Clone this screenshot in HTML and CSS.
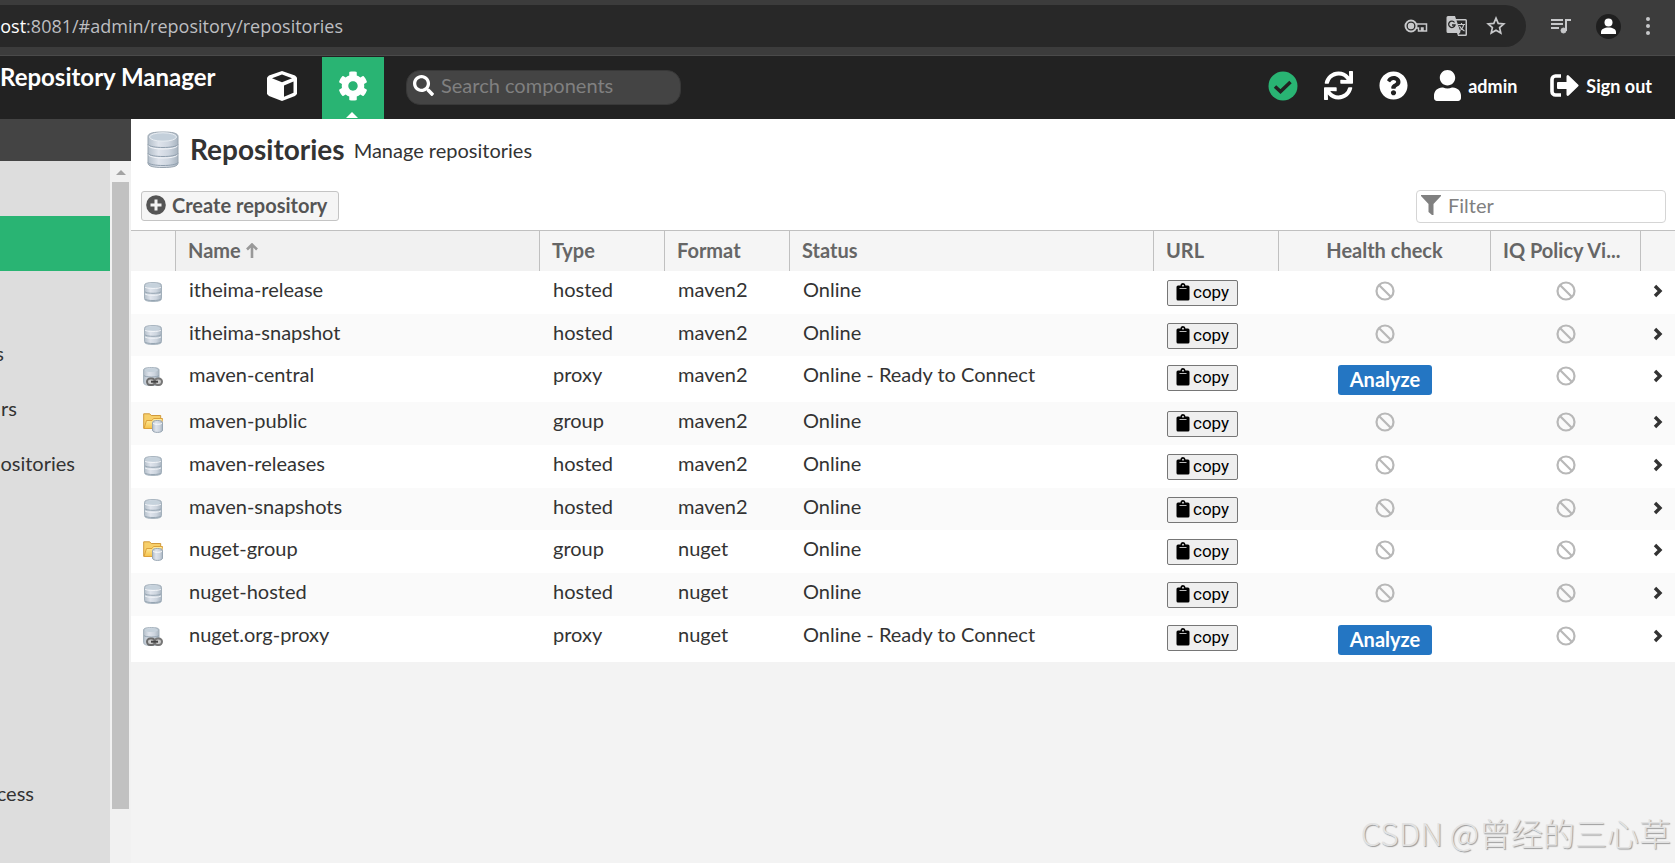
FILE: index.html
```html
<!DOCTYPE html>
<html lang="en">
<head>
<meta charset="utf-8">
<title>Repositories - Repository Manager</title>
<link rel="stylesheet" href="styles.css">
</head>
<body>
<svg class="sprite" aria-hidden="true">
  <defs>
    <linearGradient id="metal" x1="0" x2="1" y1="0" y2="0">
      <stop offset="0" stop-color="#b4bfca"/><stop offset=".35" stop-color="#dfe4ec"/><stop offset=".7" stop-color="#cdd5df"/><stop offset="1" stop-color="#a9b5c1"/>
    </linearGradient>
    <linearGradient id="folder" x1="0" x2="0" y1="0" y2="1">
      <stop offset="0" stop-color="#fff0a8"/><stop offset="1" stop-color="#f5c24a"/>
    </linearGradient>
  </defs>
  <symbol id="db" viewBox="0 0 20 20">
    <path d="M1.5 3.500C1.500 1.500 4 .6 10 .6s8.500 .9 8.500 2.900v13c0 2-2.500 2.900-8.500 2.900s-8.500-.9-8.500-2.900z" fill="url(#metal)" stroke="#a3b0bb"/>
    <ellipse cx="10" cy="3.500" rx="7.500" ry="2.200" fill="#c6d2dc"/>
    <path d="M2 5c1 2 15 2 16 0M2 11.800c1 2 15 2 16 0" fill="none" stroke="#f1f4f8"/>
    <path d="M2 9.800c1 2 15 2 16 0M2 17c1 2 15 2 16 0" fill="none" stroke="#96a5b2"/>
  </symbol>
  <symbol id="db-big" viewBox="0 0 34 38">
    <path d="M2 5.500C2 2 8 1 17 1s15 1 15 4.500V32c0 3.500-6 4.500-15 4.500S2 35.500 2 32z" fill="url(#metal)" stroke="#98a4af"/>
    <ellipse cx="17" cy="6" rx="13.500" ry="4.200" fill="#c3cfda" stroke="#e8edf2"/>
    <path d="M2 13.500c2 4 28 4 30 0M2 22.500c2 4 28 4 30 0M2 31.500c2 4 28 4 30 0" fill="none" stroke="#8f9ead"/>
    <path d="M2.500 15c2 4 27 4 29 0M2.500 24c2 4 27 4 29 0" fill="none" stroke="#f3f5f9"/>
  </symbol>
  <symbol id="db-link" viewBox="0 0 20 20">
    <path d="M.6 3C.6 1.300 3 .6 8.300 .6S16 1.300 16 3v12.500c0 2-2.500 3-7.700 3S.6 17.500 .6 15.500z" fill="url(#metal)" stroke="#a3b0bb"/>
    <ellipse cx="8.300" cy="3.200" rx="6.500" ry="1.900" fill="#c6d2dc"/>
    <path d="M1 8.500c1 2 14 2 15 0" fill="none" stroke="#96a5b2"/>
    <rect x="4" y="11.500" width="8" height="6.500" rx="3.200" fill="#ccc" stroke="#6a6a6a" stroke-width="2"/>
    <rect x="11.500" y="11.500" width="7.500" height="6.500" rx="3.200" fill="#ccc" stroke="#777" stroke-width="2"/>
    <path d="M8 14.700h7" stroke="#444" stroke-width="2"/>
  </symbol>
  <symbol id="folder-db" viewBox="0 0 20 20">
    <path d="M.7 15.300V.8h6l1.500 1.700h9.500v12.800z" fill="#f7cf6a" stroke="#d19a3c"/>
    <path d="M1 15.500l2.500-8H9l1.500-2h9l-1.500 10z" fill="url(#folder)" stroke="#dca13c"/>
    <path d="M9.500 9.500c0-1.300 2-2 5-2s5 .7 5 2v7.500c0 1.600-2 2.400-5 2.400s-5-.8-5-2.400z" fill="url(#metal)" stroke="#98a6b3"/>
    <path d="M10 10.200c1 1.400 8 1.400 9 0" fill="none" stroke="#fff"/>
  </symbol>
  <symbol id="ban" viewBox="0 0 20 20"><circle cx="10" cy="10" r="8.500" fill="none" stroke="currentColor" stroke-width="2.200"/><path d="M4 4l12 12" stroke="currentColor" stroke-width="2.200"/></symbol>
  <symbol id="chev" viewBox="0 0 10 14"><path d="M2 2l5 5-5 5" fill="none" stroke="currentColor" stroke-width="3.400"/></symbol>
  <symbol id="clip" viewBox="0 0 14 18"><path d="M2 2.500h2.500a2.500 2.500 0 0 1 5 0H12a1.500 1.500 0 0 1 1.500 1.500v12a1.500 1.500 0 0 1-1.500 1.500H2A1.500 1.500 0 0 1 .5 16V4A1.500 1.500 0 0 1 2 2.500z"/><circle cx="7" cy="2.700" r=".9" fill="#efefef"/><path d="M3.500 5.500h7" stroke="#bbb"/></symbol>
  <symbol id="cog" viewBox="0 0 512 512"><path d="M487.4 315.7l-42.6-24.600c4.300-23.200 4.300-47 0-70.200l42.600-24.600c4.900-2.800 7.100-8.600 5.500-14-11.100-35.600-30-67.800-54.700-94.600-3.800-4.100-10-5.100-14.800-2.300L380.800 110c-17.900-15.400-38.500-27.300-60.800-35.100V25.800c0-5.600-3.900-10.500-9.400-11.700-36.700-8.200-74.300-7.800-109.200 0-5.500 1.200-9.400 6.100-9.400 11.700V75c-22.200 7.900-42.800 19.800-60.800 35.100L88.700 85.500c-4.900-2.800-11-1.900-14.800 2.300-24.700 26.700-43.600 58.900-54.700 94.600-1.700 5.400.6 11.200 5.500 14L67.300 221c-4.300 23.200-4.300 47 0 70.200l-42.600 24.600c-4.900 2.800-7.100 8.600-5.500 14 11.100 35.600 30 67.800 54.700 94.600 3.800 4.100 10 5.100 14.800 2.300l42.600-24.600c17.900 15.400 38.500 27.300 60.800 35.100v49.200c0 5.600 3.900 10.500 9.400 11.700 36.700 8.200 74.300 7.800 109.200 0 5.500-1.200 9.400-6.100 9.400-11.700v-49.200c22.200-7.900 42.800-19.800 60.800-35.100l42.600 24.600c4.900 2.800 11 1.900 14.800-2.300 24.700-26.700 43.600-58.900 54.700-94.600 1.500-5.500-.7-11.300-5.600-14.100zM256 336c-44.100 0-80-35.900-80-80s35.900-80 80-80 80 35.900 80 80-35.900 80-80 80z"/></symbol>
</svg>

<div class="browser">
  <div class="address">
    <div class="url"><span class="url-host">host</span>:8081/#admin/repository/repositories</div>
    <div class="address-icons">
      <svg width="24" height="16" viewBox="0 0 24 16" fill="none" stroke="#c7c8ca" stroke-width="2"><circle cx="7" cy="8" r="5.500"/><circle cx="7" cy="8" r="2.200" fill="#c7c8ca"/><path d="M12 6h10.500v7H19v-3h-1.500v3h-3v-3H12" stroke-width="1.500"/></svg>
      <svg width="22" height="22" viewBox="0 0 22 22"><path d="M2 1h7l1 3h9.500A1.500 1.500 0 0 1 21 5.500v14a1.500 1.500 0 0 1-1.500 1.500H12l-1-3H2a1.500 1.500 0 0 1-1.500-1.500v-14A1.500 1.500 0 0 1 2 1z" fill="#c7c8ca"/><path d="M10.500 5.500h9v14h-7l2-2.500z" fill="#292929"/><path d="M8.500 7.500A3.200 3.200 0 1 0 9 10H6" fill="none" stroke="#292929" stroke-width="1.300"/><path d="M12 9.500h7M15.500 8v1.500M17.500 10c-.5 3-2.500 5-4.500 6M13.500 11c1 2.500 3 4 5 5" fill="none" stroke="#c7c8ca" stroke-width="1.200"/></svg>
      <svg width="20" height="20" viewBox="0 0 20 20"><path d="M10 2.200l2.200 5.200 5.600.5-4.200 3.700 1.200 5.500-4.800-2.900-4.800 2.900 1.200-5.500L2.200 7.900l5.600-.5z" fill="none" stroke="#c7c8ca" stroke-width="1.700"/></svg>
    </div>
  </div>
  <div class="browser-icons">
    <svg width="20" height="16" viewBox="0 0 20 16" fill="none" stroke="#c7c8ca" stroke-width="2"><path d="M0 2h12M0 6h12M0 10h8M15 13V2h5"/><circle cx="12.500" cy="12.500" r="2.500" fill="#c7c8ca" stroke-width="1"/></svg>
    <span class="avatar"><svg width="17" height="17" viewBox="0 0 17 17" fill="#fff"><circle cx="8.500" cy="4.500" r="4"/><path d="M1 16v-2c0-3 3.500-4.500 7.500-4.500S16 11 16 14v2z"/></svg></span>
    <svg width="4" height="18" viewBox="0 0 4 18" fill="#c7c8ca"><circle cx="2" cy="2" r="2"/><circle cx="2" cy="9" r="2"/><circle cx="2" cy="16" r="2"/></svg>
  </div>
</div>

<header class="topbar">
  <div class="brand">Repository Manager</div>
  <button class="mode" aria-label="Browse"><svg width="32" height="32" viewBox="0 0 32 32"><path d="M16 1l13 4.500 2 2V24l-2 2-13 5-13-5-2-2V7.500l2-2z" fill="#fff"/><path d="M16 4.500l10 3.700-10 4-10-4zM18 15.500l9.500-4v11.300L18 26.700z" fill="#222"/></svg></button>
  <button class="mode active" aria-label="Administration"><svg width="30" height="30" fill="#fff"><use href="#cog"/></svg><span class="caret"></span></button>
  <label class="search">
    <svg width="21" height="21" viewBox="0 0 512 512" fill="#fff"><path d="M505 442.700L405.300 343c-4.500-4.500-10.600-7-17-7H372c27.600-35.300 44-79.700 44-128C416 93.100 322.900 0 208 0S0 93.100 0 208s93.100 208 208 208c48.300 0 92.700-16.400 128-44v16.300c0 6.400 2.500 12.500 7 17l99.700 99.700c9.400 9.400 24.600 9.400 33.900 0l28.300-28.300c9.400-9.400 9.400-24.600.1-34zM208 336c-70.700 0-128-57.200-128-128 0-70.700 57.200-128 128-128 70.700 0 128 57.200 128 128 0 70.700-57.200 128-128 128z"/></svg>
    <input type="text" placeholder="Search components" aria-label="Search components">
  </label>
  <div class="tools">
    <button class="tool" aria-label="Status"><svg width="30" height="30" viewBox="0 0 30 30"><circle cx="15" cy="15" r="14.500" fill="#29b473"/><path d="M7 15.500l5.500 5L22.500 11" fill="none" stroke="#222" stroke-width="3.500"/></svg></button>
    <button class="tool" aria-label="Refresh"><svg width="29" height="29" viewBox="0 0 512 512" fill="#fff"><path d="M440.650 12.570l4 82.770A247.160 247.160 0 0 0 255.830 8C134.730 8 33.910 94.920 12.290 209.820A12 12 0 0 0 24.090 224h49.050a12 12 0 0 0 11.670-9.260 175.910 175.910 0 0 1 317-56.940l-101.460-4.860a12 12 0 0 0-12.570 12v47.410a12 12 0 0 0 12 12H500a12 12 0 0 0 12-12V12a12 12 0 0 0-12-12h-47.370a12 12 0 0 0-11.980 12.570zM255.830 432a175.610 175.610 0 0 1-146-77.800l101.800 4.870a12 12 0 0 0 12.570-12v-47.400a12 12 0 0 0-12-12H12a12 12 0 0 0-12 12V500a12 12 0 0 0 12 12h47.350a12 12 0 0 0 12-12.600l-4.150-82.570A247.170 247.170 0 0 0 255.830 504c121.110 0 221.930-86.920 243.550-201.820a12 12 0 0 0-11.800-14.180h-49.050a12 12 0 0 0-11.670 9.260A175.860 175.860 0 0 1 255.830 432z"/></svg></button>
    <button class="tool" aria-label="Help"><svg width="29" height="29" viewBox="0 0 512 512" fill="#fff"><path d="M504 256c0 136.997-111.043 248-248 248S8 392.997 8 256C8 119.083 119.043 8 256 8s248 111.083 248 248zM262.655 90c-54.497 0-89.255 22.957-116.549 63.758-3.536 5.286-2.353 12.415 2.715 16.258l34.699 26.310c5.205 3.947 12.621 3.008 16.665-2.122 17.864-22.658 30.113-35.797 57.303-35.797 20.429 0 45.698 13.148 45.698 32.958 0 14.976-12.363 22.667-32.534 33.976C247.128 238.528 216 254.941 216 296v4c0 6.627 5.373 12 12 12h56c6.627 0 12-5.373 12-12v-1.333c0-28.462 83.186-29.647 83.186-106.667 0-58.002-60.165-102-116.531-102zM256 338c-25.365 0-46 20.635-46 46 0 25.364 20.635 46 46 46s46-20.636 46-46c0-25.365-20.635-46-46-46z"/></svg></button>
    <button class="tool tool-user"><svg width="27" height="31" viewBox="0 0 448 512" fill="#fff"><path d="M224 256c70.700 0 128-57.300 128-128S294.700 0 224 0 96 57.300 96 128s57.300 128 128 128zm89.600 32h-16.700c-22.200 10.200-46.900 16-72.900 16s-50.600-5.800-72.900-16h-16.700C60.200 288 0 348.200 0 422.400V464c0 26.500 21.500 48 48 48h352c26.500 0 48-21.500 48-48v-41.600c0-74.200-60.200-134.400-134.400-134.400z"/></svg>admin</button>
    <button class="tool tool-out"><svg width="29" height="23" viewBox="0 0 29 23"><path d="M11 2H5.500A3.500 3.500 0 0 0 2 5.500v12A3.500 3.500 0 0 0 5.500 21H11" fill="none" stroke="#fff" stroke-width="3.600"/><path d="M8 8h8.500V2.500a1.300 1.300 0 0 1 2.200-1L28 10.500a1.300 1.300 0 0 1 0 2l-9.300 9a1.300 1.300 0 0 1-2.200-1V15H8a1 1 0 0 1-1-1V9a1 1 0 0 1 1-1z" fill="#fff"/></svg>Sign out</button>
  </div>
</header>

<div class="body">
  <aside class="side">
    <div class="side-head"></div>
    <div class="side-body">
      <nav class="menu">
        <div class="item"></div>
        <div class="item selected"></div>
        <div class="item"></div>
        <div class="item"><span class="cut cut-xs">s</span></div>
        <div class="item"><span class="cut cut-sm">rs</span></div>
        <div class="item"><span class="cut cut-lg">ositories</span></div>
        <div class="item"></div>
        <div class="item"></div>
        <div class="item"></div>
        <div class="item"></div>
        <div class="item"></div>
        <div class="item"><span class="cut cut-md">cess</span></div>
      </nav>
      <div class="scroll"><div class="scroll-up"></div><div class="scroll-thumb"></div></div>
    </div>
  </aside>

  <main class="main">
    <div class="head">
      <svg width="34" height="38"><use href="#db-big"/></svg>
      <h1>Repositories</h1>
      <span class="sub">Manage repositories</span>
    </div>
    <div class="bar">
      <button class="create"><svg width="20" height="20" viewBox="0 0 20 20"><circle cx="10" cy="10" r="9.800" fill="#555"/><path d="M10 4.500v11M4.500 10h11" stroke="#f5f5f5" stroke-width="3"/></svg>Create repository</button>
      <label class="filter"><svg width="20" height="20" viewBox="0 0 20 20"><path d="M0 0h20v1l-7.500 8v11h-1.500L7.500 17V9L0 1z" fill="#808080"/></svg><input type="text" placeholder="Filter" aria-label="Filter"></label>
    </div>
    <table class="grid">
      <colgroup><col class="c-icon"><col><col class="c-std"><col class="c-std"><col><col class="c-std"><col class="c-health"><col class="c-iq"><col class="c-go"></colgroup>
      <thead><tr><th></th><th class="sorted">Name <svg width="12" height="15" viewBox="0 0 12 15"><path d="M6 15V2M1 6.500L6 1.500l5 5" fill="none" stroke="#999" stroke-width="2.600"/></svg></th><th>Type</th><th>Format</th><th>Status</th><th>URL</th><th class="mid">Health check</th><th>IQ Policy Vi...</th><th></th></tr></thead>
      <tbody>
        <tr><td class="ico"><svg width="20" height="20"><use href="#db"/></svg></td><td>itheima-release</td><td>hosted</td><td>maven2</td><td>Online</td><td><button class="copy"><svg width="14" height="18"><use href="#clip"/></svg>copy</button></td><td class="na"><svg width="20" height="20"><use href="#ban"/></svg></td><td class="na"><svg width="20" height="20"><use href="#ban"/></svg></td><td class="go"><svg width="10" height="14"><use href="#chev"/></svg></td></tr>
        <tr><td class="ico"><svg width="20" height="20"><use href="#db"/></svg></td><td>itheima-snapshot</td><td>hosted</td><td>maven2</td><td>Online</td><td><button class="copy"><svg width="14" height="18"><use href="#clip"/></svg>copy</button></td><td class="na"><svg width="20" height="20"><use href="#ban"/></svg></td><td class="na"><svg width="20" height="20"><use href="#ban"/></svg></td><td class="go"><svg width="10" height="14"><use href="#chev"/></svg></td></tr>
        <tr class="tall"><td class="ico"><svg width="20" height="20"><use href="#db-link"/></svg></td><td>maven-central</td><td>proxy</td><td>maven2</td><td>Online - Ready to Connect</td><td><button class="copy"><svg width="14" height="18"><use href="#clip"/></svg>copy</button></td><td class="mid"><button class="analyze">Analyze</button></td><td class="na"><svg width="20" height="20"><use href="#ban"/></svg></td><td class="go"><svg width="10" height="14"><use href="#chev"/></svg></td></tr>
        <tr><td class="ico"><svg width="20" height="20"><use href="#folder-db"/></svg></td><td>maven-public</td><td>group</td><td>maven2</td><td>Online</td><td><button class="copy"><svg width="14" height="18"><use href="#clip"/></svg>copy</button></td><td class="na"><svg width="20" height="20"><use href="#ban"/></svg></td><td class="na"><svg width="20" height="20"><use href="#ban"/></svg></td><td class="go"><svg width="10" height="14"><use href="#chev"/></svg></td></tr>
        <tr><td class="ico"><svg width="20" height="20"><use href="#db"/></svg></td><td>maven-releases</td><td>hosted</td><td>maven2</td><td>Online</td><td><button class="copy"><svg width="14" height="18"><use href="#clip"/></svg>copy</button></td><td class="na"><svg width="20" height="20"><use href="#ban"/></svg></td><td class="na"><svg width="20" height="20"><use href="#ban"/></svg></td><td class="go"><svg width="10" height="14"><use href="#chev"/></svg></td></tr>
        <tr><td class="ico"><svg width="20" height="20"><use href="#db"/></svg></td><td>maven-snapshots</td><td>hosted</td><td>maven2</td><td>Online</td><td><button class="copy"><svg width="14" height="18"><use href="#clip"/></svg>copy</button></td><td class="na"><svg width="20" height="20"><use href="#ban"/></svg></td><td class="na"><svg width="20" height="20"><use href="#ban"/></svg></td><td class="go"><svg width="10" height="14"><use href="#chev"/></svg></td></tr>
        <tr><td class="ico"><svg width="20" height="20"><use href="#folder-db"/></svg></td><td>nuget-group</td><td>group</td><td>nuget</td><td>Online</td><td><button class="copy"><svg width="14" height="18"><use href="#clip"/></svg>copy</button></td><td class="na"><svg width="20" height="20"><use href="#ban"/></svg></td><td class="na"><svg width="20" height="20"><use href="#ban"/></svg></td><td class="go"><svg width="10" height="14"><use href="#chev"/></svg></td></tr>
        <tr><td class="ico"><svg width="20" height="20"><use href="#db"/></svg></td><td>nuget-hosted</td><td>hosted</td><td>nuget</td><td>Online</td><td><button class="copy"><svg width="14" height="18"><use href="#clip"/></svg>copy</button></td><td class="na"><svg width="20" height="20"><use href="#ban"/></svg></td><td class="na"><svg width="20" height="20"><use href="#ban"/></svg></td><td class="go"><svg width="10" height="14"><use href="#chev"/></svg></td></tr>
        <tr class="tall"><td class="ico"><svg width="20" height="20"><use href="#db-link"/></svg></td><td>nuget.org-proxy</td><td>proxy</td><td>nuget</td><td>Online - Ready to Connect</td><td><button class="copy"><svg width="14" height="18"><use href="#clip"/></svg>copy</button></td><td class="mid"><button class="analyze">Analyze</button></td><td class="na"><svg width="20" height="20"><use href="#ban"/></svg></td><td class="go"><svg width="10" height="14"><use href="#chev"/></svg></td></tr>
      </tbody>
    </table>
    <div class="watermark">CSDN @曾经的三心草</div>
  </main>
</div>
</body>
</html>
```

FILE: styles.css
```css
* { box-sizing: border-box; }

body {
  margin: 0;
  height: 100vh;
  display: flex;
  flex-direction: column;
  overflow: hidden;
  background: #f3f3f3;
  color: #333;
  font: 20px/24px Lato, "Noto Sans CJK SC", sans-serif;
}

svg { display: block; flex: none; }
button, input { font: inherit; color: inherit; }
button { cursor: pointer; }
.sprite { position: absolute; width: 0; height: 0; }

/* Browser toolbar */
.browser {
  display: flex;
  align-items: flex-start;
  height: 56px;
  flex: none;
  padding-top: 5px;
  background: #3c3c3c;
  border-bottom: 1px solid #4a4a4a;
}
.address {
  flex: 1;
  display: flex;
  align-items: center;
  justify-content: space-between;
  height: 42px;
  padding-right: 20px;
  background: #282828;
  border-radius: 0 21px 21px 0;
}
.url {
  display: flex;
  justify-content: flex-end;
  width: 343px;
  overflow: hidden;
  white-space: nowrap;
  color: #bdbec1;
  font: 18px/26px "Open Sans", sans-serif;
}
.url-host { color: #fff; }
.address-icons { display: flex; align-items: center; gap: 18px; }
.browser-icons {
  display: flex;
  align-items: center;
  gap: 25px;
  height: 42px;
  padding: 0 25px;
}
.avatar {
  display: flex;
  align-items: center;
  justify-content: center;
  width: 25px;
  height: 25px;
  border-radius: 50%;
  background: #1f1f1f;
}

/* Application header */
.topbar {
  display: flex;
  align-items: center;
  height: 63px;
  flex: none;
  padding-right: 23px;
  background: #222;
  color: #fff;
}
.brand {
  width: 260px;
  align-self: flex-start;
  padding-top: 8px;
  font-size: 24px;
  line-height: 26px;
  font-weight: 700;
  white-space: nowrap;
}
.mode {
  position: relative;
  display: flex;
  align-items: center;
  justify-content: center;
  width: 62px;
  height: 62px;
  margin-top: 1px;
  padding: 0 0 4px;
  border: 0;
  background: none;
}
.mode svg { margin-left: -18px; }
.mode.active { background: #29b473; }
.mode.active svg { margin: 0; }
.caret {
  position: absolute;
  left: 50%;
  bottom: 1px;
  margin-left: -7px;
  border: 6px solid transparent;
  border-top: 0;
  border-bottom-color: #fff;
}
.search {
  display: flex;
  align-items: center;
  gap: 7px;
  width: 275px;
  height: 35px;
  margin: -1px 0 0 22px;
  padding: 0 6px 4px;
  border: 1px solid #383838;
  border-radius: 14px;
  background: #444;
}
.search input, .filter input {
  flex: 1;
  min-width: 0;
  padding: 0;
  border: 0;
  outline: 0;
  background: none;
}
.search input::placeholder { color: #808080; opacity: 1; }
.tools {
  display: flex;
  align-items: center;
  gap: 26px;
  margin-left: auto;
  padding-bottom: 4px;
}
.tool {
  display: flex;
  align-items: center;
  gap: 7px;
  padding: 0;
  border: 0;
  background: none;
  color: #fff;
  font-size: 18px;
  font-weight: 700;
}
.tool-out { margin-left: 7px; }

/* Page body */
.body { flex: 1; display: flex; min-height: 0; }
.side { width: 131px; flex: none; display: flex; flex-direction: column; }
.side-head { height: 42px; flex: none; background: #444; }
.side-body { flex: 1; display: flex; min-height: 0; }
.menu { flex: 1; overflow: hidden; background: #ddd; }
.item { display: flex; align-items: center; height: 55px; padding-bottom: 2px; }
.item.selected { background: #29b473; }
.cut { display: flex; justify-content: flex-end; overflow: hidden; }
.cut-xs { width: 4px; }
.cut-sm { width: 17px; }
.cut-md { width: 34px; }
.cut-lg { width: 75px; }
.scroll {
  display: flex;
  flex-direction: column;
  align-items: center;
  width: 21px;
  padding-bottom: 54px;
  background: #f1f1f1;
}
.scroll-up {
  margin: 9px 0 7px;
  border: 5px solid transparent;
  border-top: 0;
  border-bottom-color: #a3a3a3;
}
.scroll-thumb { flex: 1; width: 17px; background: #c1c1c1; }

.main { position: relative; flex: 1; min-width: 0; }
.head {
  display: flex;
  align-items: center;
  height: 63px;
  padding: 0 15px 2px;
  background: #fff;
}
.head h1 { margin: 0 9px 2px 10px; font-size: 28px; line-height: 32px; font-weight: 700; }
.bar {
  display: flex;
  align-items: center;
  justify-content: space-between;
  height: 48px;
  padding: 0 9px 0 10px;
  background: #fff;
}
.create {
  display: flex;
  align-items: center;
  gap: 6px;
  height: 30px;
  padding: 0 11px 2px 4px;
  border: 1px solid #c4c4c4;
  border-radius: 3px;
  background: #f5f5f5;
  color: #555;
  font-weight: 700;
}
.filter {
  display: flex;
  align-items: center;
  gap: 7px;
  width: 250px;
  height: 33px;
  padding: 0 4px 2px;
  border: 1px solid #d5d5d5;
  border-radius: 4px;
}
.filter input::placeholder { color: #808080; opacity: 1; }

/* Repository grid */
.grid { width: 100%; table-layout: fixed; border-collapse: separate; border-spacing: 0; }
.c-icon { width: 45px; }
.c-std { width: 125px; }
.c-health { width: 212px; }
.c-iq { width: 150px; }
.c-go { width: 34px; }
.grid th {
  height: 41px;
  padding: 0 12px 2px;
  border-top: 1px solid #c0c0c0;
  border-right: 1px solid #c0c0c0;
  background: #f5f5f5;
  color: #666;
  font-weight: 700;
  text-align: left;
  white-space: nowrap;
}
.grid th:last-child { border-right: 0; }
.grid th.sorted { background: #f1f1f1; }
.grid th svg { display: inline-block; }
.grid td { height: 43px; padding: 6px 13px 0; vertical-align: top; white-space: nowrap; }
.grid tr:nth-child(4n+2) td { height: 42px; }
.grid .tall td { height: 46px; }
.grid tbody tr { background: #fff; }
.grid tbody tr:nth-child(even) { background: #fafafa; }
.grid td.ico { padding: 11px 12px 0; }
.grid th.mid, .grid td.mid { text-align: center; }
.grid td.na { padding-top: 10px; color: #b8b8b8; }
.na svg { margin: 0 auto; }
.grid td.go { padding: 13px 12px 0; }
.copy {
  display: flex;
  align-items: center;
  gap: 3px;
  height: 26px;
  margin-top: 3px;
  padding: 0 8px 2px;
  border: 1px solid #767676;
  border-radius: 2px;
  background: #efefef;
  color: #000;
  font: 17px/20px Roboto, sans-serif;
}
.analyze {
  height: 30px;
  margin-top: 3px;
  padding: 0 12px 2px;
  border: 0;
  border-radius: 3px;
  background: #2476c3;
  color: #fff;
  font-weight: 700;
}
.watermark {
  position: absolute;
  right: 4px;
  bottom: 11px;
  color: #e2e2e2;
  font: 300 32px/40px "Noto Sans CJK SC", sans-serif;
  text-shadow: 1px 1px 1px #999;
}
```
